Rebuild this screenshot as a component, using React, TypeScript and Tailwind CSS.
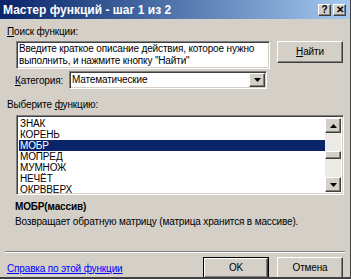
const items = ['ЗНАК', 'КОРЕНЬ', 'МОБР', 'МОПРЕД', 'МУМНОЖ', 'НЕЧЁТ', 'ОКРВВЕРХ']

const raised = 'border border-t-white border-l-white border-r-[#404040] border-b-[#404040] shadow-[inset_-1px_-1px_0_#808080,inset_1px_1px_0_#d4d0c8]'
const sunken = 'border border-t-[#808080] border-l-[#808080] border-r-white border-b-white shadow-[inset_1px_1px_0_#404040,inset_-1px_-1px_0_#d4d0c8]'

function Arrow({ dir }: { dir: 'up' | 'down' }) {
  return (
    <svg width="7" height="4" viewBox="0 0 7 4">
      {dir === 'up' ? <path d="M3.5 0 L7 4 L0 4 Z" fill="#000" /> : <path d="M0 0 L7 0 L3.5 4 Z" fill="#000" />}
    </svg>
  )
}

function TitleButton({ children }: { children: React.ReactNode }) {
  return (
    <div className={`w-[13px] h-[12px] bg-[#d4d0c8] ${raised} flex items-center justify-center text-[10px] font-bold leading-none text-black tracking-normal`}>
      {children}
    </div>
  )
}

export default function App() {
  return (
    <div className="w-[351px] h-[279px] bg-[#d4d0c8] text-[10px] tracking-[-0.15px] text-black whitespace-nowrap overflow-hidden flex flex-col border-b-2 border-b-[#404040] border-r border-r-[#404040]" style={{ fontFamily: '"Liberation Sans", Arial, sans-serif' }}>
      <div className="h-[19px] shrink-0 flex items-center pl-[3px] pr-[4px] bg-gradient-to-r from-[#0a246a] to-[#a6caf0]">
        <span className="flex-1 text-white font-bold text-[12px] tracking-normal leading-none">Мастер функций - шаг 1 из 2</span>
        <div className="flex gap-[2px]">
          <TitleButton>?</TitleButton>
          <TitleButton>✕</TitleButton>
        </div>
      </div>

      <div className="pl-[7px] pt-[6px] leading-[13px]">
        <span className="underline">П</span>оиск функции:
      </div>

      <div className="flex items-start pl-[16px] pt-[3px]">
        <div className={`w-[254px] h-[28px] bg-white ${sunken} px-[2px] pt-[1px] leading-[12px] overflow-hidden`}>
          Введите краткое описание действия, которое нужно<br />
          выполнить, и нажмите кнопку "Найти"
        </div>
        <button className={`ml-[7px] w-[66px] h-[22px] bg-[#d4d0c8] ${raised} leading-none`}>
          <span className="underline">Н</span>айти
        </button>
      </div>

      <div className="flex items-center pl-[15px] pt-[2px]">
        <span className="w-[54px]"><span className="underline">К</span>атегория:</span>
        <div className={`w-[198px] h-[18px] bg-white ${sunken} flex items-center`}>
          <span className="flex-1 pl-[2px] leading-none">Математические</span>
          <div className={`w-[16px] h-[14px] mr-[1px] bg-[#d4d0c8] ${raised} flex items-center justify-center`}>
            <Arrow dir="down" />
          </div>
        </div>
      </div>

      <div className="pl-[7px] pt-[9px] leading-[13px]">
        Выберите <span className="underline">ф</span>ункцию:
      </div>

      <div className={`ml-[16px] mt-[4px] w-[328px] h-[80px] bg-white ${sunken} flex p-[2px]`}>
        <div className="flex-1 flex flex-col">
          {items.map(it => (
            <div key={it} className={`h-[11px] leading-[11px] pl-[1px] ${it === 'МОБР' ? 'bg-[#0a246a] text-white' : ''}`}>{it}</div>
          ))}
        </div>
        <div className="w-[16px] flex flex-col bg-[#ebeae4]">
          <div className={`h-[15px] bg-[#d4d0c8] ${raised} flex items-center justify-center`}><Arrow dir="up" /></div>
          <div className="h-[18px]" />
          <div className={`h-[8px] bg-[#d4d0c8] ${raised}`} />
          <div className="flex-1" />
          <div className={`h-[15px] bg-[#d4d0c8] ${raised} flex items-center justify-center`}><Arrow dir="down" /></div>
        </div>
      </div>

      <div className="pl-[15px] pt-[5px] font-bold leading-[13px]">МОБР(массив)</div>
      <div className="pl-[15px] pt-[2px] leading-[13px]">Возвращает обратную матрицу (матрица хранится в массиве).</div>

      <div className="mx-[5px] mt-[23px] h-[2px] border-t border-t-[#808080] border-b border-b-white" />

      <div className="flex items-center pl-[7px] pr-[7px] pt-[4px]">
        <span className="flex-1 text-[#0000ff] underline">Справка по этой функции</span>
        <button className="w-[66px] h-[22px] border border-black bg-[#d4d0c8] leading-none">
          <div className={`h-full flex items-center justify-center ${raised}`}>OK</div>
        </button>
        <button className={`ml-[8px] w-[66px] h-[22px] bg-[#d4d0c8] ${raised} leading-none`}>Отмена</button>
      </div>
    </div>
  )
}
